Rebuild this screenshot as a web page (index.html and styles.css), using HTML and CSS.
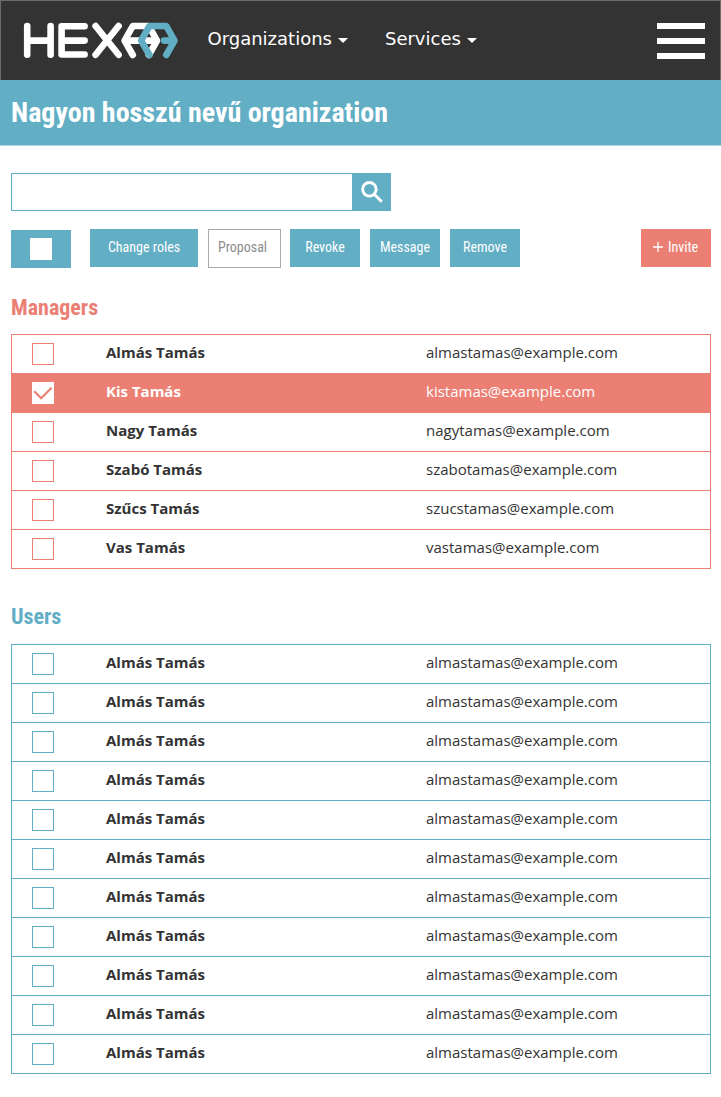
FILE: index.html
```html
<!DOCTYPE html>
<html lang="hu">
<head>
<meta charset="utf-8">
<title>HEXAA</title>
<link rel="stylesheet" href="styles.css">
</head>
<body>
<header class="topbar">
  <svg class="logo" width="160" height="44" viewBox="20 18 160 44" role="img" aria-label="HEXAA">
    <g class="logo-white">
      <path d="M27.2 26v28.8M50.6 26v28.8M27.2 40.6h23.4"/>
      <path d="M84.6 26.3H61.6v28.2h23M61.6 40.6h23"/>
      <path d="M95.6 26l23 28.8M118.6 26l-23 28.8"/>
      <path d="M132.8 55l-8.2-14.4 8.2-14.6h16l8.2 14.6-8.2 14.4M130 40.6h26"/>
    </g>
    <path class="logo-blue" d="M149.5 55l-8.4-14.4 8.4-14.6h16.8l8.2 14.6-8.2 14.4M164 40.6h9"/>
  </svg>
  <nav class="nav">
    <a class="nav-link nav-org">Organizations<i class="caret"></i></a>
    <a class="nav-link">Services<i class="caret"></i></a>
  </nav>
  <div class="menu"><span></span><span></span><span></span></div>
</header>
<h1 class="title">Nagyon hosszú nevű organization</h1>
<main class="content">
  <div class="search">
    <div class="search-field"></div>
    <div class="search-button">
      <svg width="39" height="38" viewBox="0 0 39 38"><circle cx="17.4" cy="16.3" r="6.8"/><path d="M22 21l7.8 7.8"/></svg>
    </div>
  </div>
  <div class="toolbar">
    <div class="button select-all"><span></span></div>
    <div class="button change">Change roles</div>
    <div class="button proposal">Proposal</div>
    <div class="button">Revoke</div>
    <div class="button">Message</div>
    <div class="button">Remove</div>
    <div class="button invite"><svg width="10" height="10" viewBox="0 0 10 10"><path d="M5 0v10M0 5h10"/></svg>Invite</div>
  </div>
  <section class="group managers">
    <h2 class="heading">Managers</h2>
    <ul class="list">
      <li class="row"><i class="box"></i><b class="name">Almás Tamás</b><span>almastamas@example.com</span></li>
      <li class="row selected"><i class="box"><svg width="22" height="22" viewBox="0 0 22 22"><path d="M2.2 9.2l7 7L19.6 5.8"/></svg></i><b class="name">Kis Tamás</b><span>kistamas@example.com</span></li>
      <li class="row"><i class="box"></i><b class="name">Nagy Tamás</b><span>nagytamas@example.com</span></li>
      <li class="row"><i class="box"></i><b class="name">Szabó Tamás</b><span>szabotamas@example.com</span></li>
      <li class="row"><i class="box"></i><b class="name">Szűcs Tamás</b><span>szucstamas@example.com</span></li>
      <li class="row"><i class="box"></i><b class="name">Vas Tamás</b><span>vastamas@example.com</span></li>
    </ul>
  </section>
  <section class="group users">
    <h2 class="heading">Users</h2>
    <ul class="list">
      <li class="row"><i class="box"></i><b class="name">Almás Tamás</b><span>almastamas@example.com</span></li>
      <li class="row"><i class="box"></i><b class="name">Almás Tamás</b><span>almastamas@example.com</span></li>
      <li class="row"><i class="box"></i><b class="name">Almás Tamás</b><span>almastamas@example.com</span></li>
      <li class="row"><i class="box"></i><b class="name">Almás Tamás</b><span>almastamas@example.com</span></li>
      <li class="row"><i class="box"></i><b class="name">Almás Tamás</b><span>almastamas@example.com</span></li>
      <li class="row"><i class="box"></i><b class="name">Almás Tamás</b><span>almastamas@example.com</span></li>
      <li class="row"><i class="box"></i><b class="name">Almás Tamás</b><span>almastamas@example.com</span></li>
      <li class="row"><i class="box"></i><b class="name">Almás Tamás</b><span>almastamas@example.com</span></li>
      <li class="row"><i class="box"></i><b class="name">Almás Tamás</b><span>almastamas@example.com</span></li>
      <li class="row"><i class="box"></i><b class="name">Almás Tamás</b><span>almastamas@example.com</span></li>
      <li class="row"><i class="box"></i><b class="name">Almás Tamás</b><span>almastamas@example.com</span></li>
    </ul>
  </section>
</main>
</body>
</html>
```
FILE: styles.css
```css
* { box-sizing: border-box; }
body { margin: 0; height: 1097px; background: #fff; color: #333; font-family: "Open Sans", sans-serif; }
h1, h2, ul { margin: 0; padding: 0; }
svg { display: block; fill: none; }

.topbar { display: flex; align-items: flex-start; height: 80px; padding: 17px 15px 0 19px; background: #333; border: 1px solid #6b6b6b; border-bottom: 0; }
.logo { flex: none; }
.logo path { stroke-width: 6.6; stroke-linecap: round; stroke-linejoin: round; }
.logo-white { stroke: #fff; }
.logo-blue { stroke: #62aec5; }
.nav { display: flex; gap: 37px; padding: 9px 0 0 27.5px; color: #fff; font: 18px/24px "DejaVu Sans", sans-serif; }
.nav-link { display: flex; align-items: center; }
.caret { margin: 3px 0 0 6px; border: 5px solid transparent; border-top-color: #fff; border-bottom: 0; }
.menu { display: flex; flex-direction: column; gap: 9px; margin: 5px 0 0 auto; }
.menu span { width: 48px; height: 6px; background: #fff; }

.title { height: 66px; padding-left: 11px; background: #62aec5; border-bottom: 1px solid #b0d6e2; color: #fff; font: 700 28px/65px "Roboto Condensed", Roboto, sans-serif; font-stretch: 75%; }

.content { padding: 27px 10px 0 11px; }
.search { display: flex; width: 380px; height: 38px; }
.search-field { flex: 1; border: 1px solid #62aec5; border-right: 0; }
.search-button { width: 39px; background: #62aec5; }
.search-button svg { stroke: #fff; stroke-width: 2.9; }

.toolbar { display: flex; gap: 10px; margin-top: 18px; height: 39px; }
.button { display: flex; align-items: center; justify-content: center; width: 70px; height: 38px; padding-bottom: 2px; background: #62aec5; color: #fff; font: 14px/20px "Roboto Condensed", Roboto, sans-serif; font-stretch: 75%; }
.select-all { width: 60px; margin: 1px 9px 0 0; padding: 0; }
.select-all span { width: 22px; height: 22px; background: #fff; }
.change { width: 108px; }
.proposal { width: 73px; height: 39px; padding: 0 4px 3px 0; background: #fff; border: 1px solid #aaa; color: #8c8c8c; margin-right: -1px; }
.invite { margin-left: auto; gap: 5px; padding-right: 1px; background: #eb7f74; }
.invite svg { stroke: #fff; stroke-width: 1.3; }

.heading { height: 30px; color: var(--tone); font: 700 22px/30px "Roboto Condensed", Roboto, sans-serif; font-stretch: 75%; }
.managers { margin-top: 25px; --tone: #eb7f74; }
.users { margin-top: 33px; --tone: #62aec5; }
.list { list-style: none; margin-top: 11px; border: 1px solid var(--tone); border-bottom: 0; }
.users .list { margin-top: 12px; }
.row { display: grid; grid-template-columns: 74px 320px 1fr; align-items: center; height: 39px; padding-left: 20px; border-bottom: 1px solid var(--tone); font-size: 15px; line-height: 20px; }
.row > .name, .row > span { margin-top: -4px; }
.box { width: 22px; height: 22px; border: 1px solid var(--tone); }
.selected { background: var(--tone); color: #fff; }
.selected .box { background: #fff; border: 0; }
.box svg { stroke: #eb7f74; stroke-width: 2.2; }
```
